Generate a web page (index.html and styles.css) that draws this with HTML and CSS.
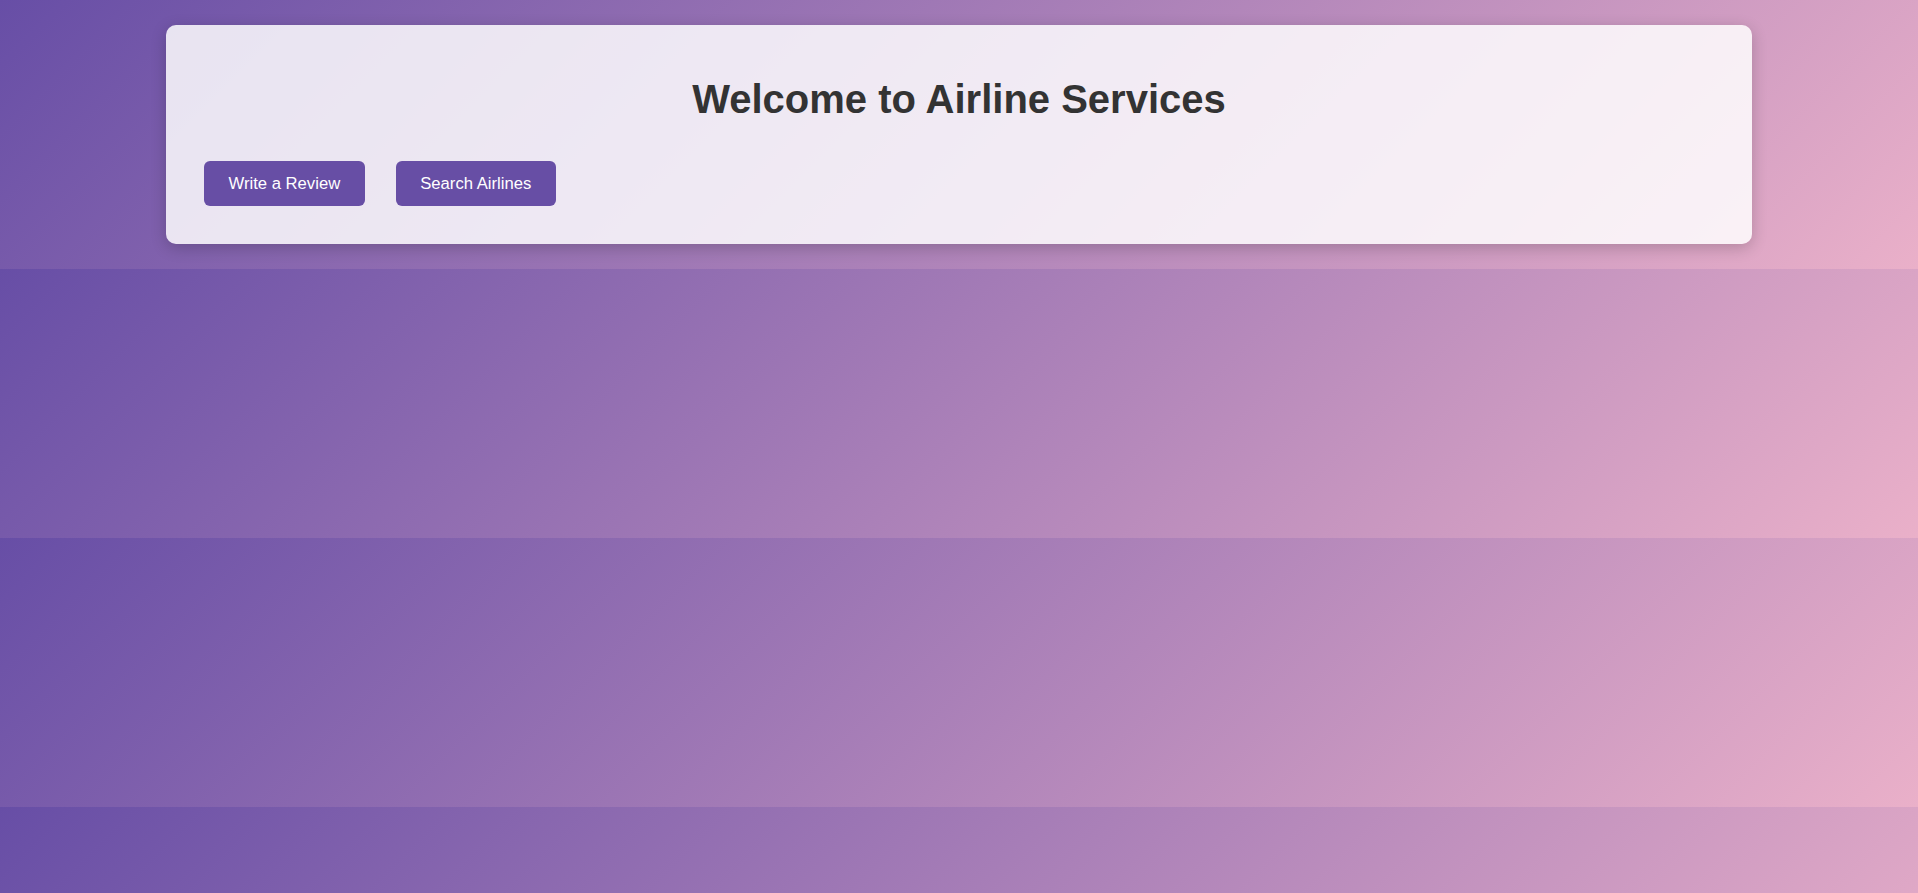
FILE: index.html
```html
<!DOCTYPE html>
<html lang="en">
<head>
<meta charset="utf-8">
<title>Airline Services</title>
<link rel="stylesheet" href="styles.css">
</head>
<body>
<div class="card">
  <h1 class="title">Welcome to Airline Services</h1>
  <div class="actions">
    <button class="btn">Write a Review</button>
    <button class="btn">Search Airlines</button>
  </div>
</div>
</body>
</html>
```
FILE: styles.css
```css
body {
  margin: 0;
  padding: 25px 0;
  font-family: "Liberation Sans", Arial, sans-serif;
  background: linear-gradient(135deg, #674ea6 0%, #eab0c9 100%);
}

.card {
  box-sizing: border-box;
  max-width: 1586px;
  margin: 0 auto;
  padding: 51px 38px 38px;
  background: rgba(255, 255, 255, 0.84);
  border-radius: 10px;
  box-shadow: 0 4px 16px rgba(0, 0, 0, 0.2);
}

.title {
  margin: 0 0 39px;
  font-size: 40px;
  line-height: 46px;
  font-weight: bold;
  text-align: center;
  color: #333333;
}

.actions {
  display: flex;
  gap: 31px;
}

.btn {
  font-family: "Liberation Sans", Arial, sans-serif;
  font-size: 16.67px;
  line-height: 19px;
  padding: 13px 24.5px;
  border: none;
  border-radius: 6px;
  background: #674ea5;
  color: #ffffff;
  cursor: pointer;
}
```
